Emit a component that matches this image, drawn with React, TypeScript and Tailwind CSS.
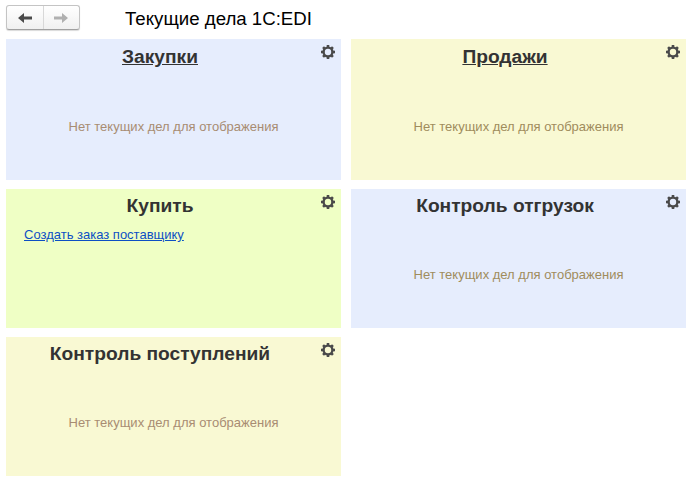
function Gear() {
  const teeth = [0, 45, 90, 135, 180, 225, 270, 315];
  return (
    <svg width="16" height="16" viewBox="0 0 16 16" className="absolute right-[5px] top-[5px]">
      <circle cx="8" cy="8" r="4.4" fill="none" stroke="#4a4a4a" strokeWidth="2.4" />
      {teeth.map((deg) => (
        <rect key={deg} x="6.7" y="1" width="2.6" height="3" fill="#4a4a4a" transform={`rotate(${deg} 8 8)`} />
      ))}
    </svg>
  );
}

interface PanelProps {
  title: string;
  color: string;
  height: string;
  textColor?: string;
  underline?: boolean;
  link?: string;
  emptyPad?: string;
}

function Panel({ title, color, height, textColor, underline, link, emptyPad }: PanelProps) {
  return (
    <div className={`relative w-[335px] ${height} ${color}`}>
      <Gear />
      <h2
        className={`pr-[27px] text-center text-[19.2px] leading-[23px] font-bold text-[#333333] ${underline ? 'pt-[6px] underline' : 'pt-[5px]'}`}
      >
        {title}
      </h2>
      {link ? (
        <a href="#" className="mt-[10px] ml-[18px] block text-[13px] leading-[15px] text-[#0d4fc4] underline">
          {link}
        </a>
      ) : (
        <p className={`${emptyPad} text-center text-[13px] leading-[15px] ${textColor}`}>
          Нет текущих дел для отображения
        </p>
      )}
    </div>
  );
}

export default function App() {
  return (
    <div className="h-[496px] w-[695px] overflow-hidden bg-white font-['Liberation_Sans',Arial,sans-serif]">
      {/* Toolbar */}
      <div className="flex h-[39px] items-start pl-[6px] pt-[5px]">
        <div className="flex h-[25px] w-[74px] rounded-[3px] border border-[#c4c4c4] border-b-[#a0a0a0] bg-gradient-to-b from-white to-[#f0f0f0] shadow-[0_1px_1px_rgba(0,0,0,0.15)]">
          <div className="flex flex-1 items-center justify-center border-r border-[#d8d8d8]">
            <svg width="14" height="10" viewBox="0 0 14 10">
              <path d="M0 5 L6 0 V3.5 H14 V6.5 H6 V10 Z" fill="#4a4a4a" />
            </svg>
          </div>
          <div className="flex flex-1 items-center justify-center">
            <svg width="14" height="10" viewBox="0 0 14 10">
              <path d="M14 5 L8 0 V3.5 H0 V6.5 H8 V10 Z" fill="#b0b0b0" />
            </svg>
          </div>
        </div>
        <h1 className="ml-[45px] text-[18.67px] leading-[28px] text-black">Текущие дела 1С:EDI</h1>
      </div>

      {/* Panels */}
      <div className="flex gap-[10px] pl-[6px]">
        <div className="flex flex-col gap-[9px]">
          <Panel title="Закупки" color="bg-[#e6edfd]" height="h-[141px]" textColor="text-[#a88c72]" underline emptyPad="pt-[51px]" />
          <Panel title="Купить" color="bg-[#efffc5]" height="h-[139px]" link="Создать заказ поставщику" />
          <Panel title="Контроль поступлений" color="bg-[#f9f9d3]" height="h-[139px]" textColor="text-[#a88c72]" emptyPad="pt-[50px]" />
        </div>
        <div className="flex flex-col gap-[9px]">
          <Panel title="Продажи" color="bg-[#f9f9d3]" height="h-[141px]" textColor="text-[#a08c5c]" underline emptyPad="pt-[51px]" />
          <Panel title="Контроль отгрузок" color="bg-[#e6edfd]" height="h-[139px]" textColor="text-[#a08c5c]" emptyPad="pt-[50px]" />
        </div>
      </div>
    </div>
  );
}
